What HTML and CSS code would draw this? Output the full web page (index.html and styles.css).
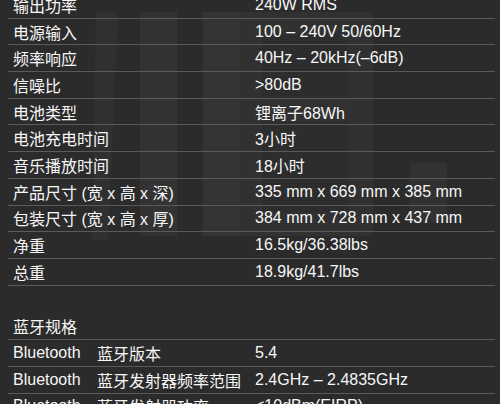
FILE: index.html
```html
<!DOCTYPE html>
<html lang="zh-CN">
<head>
    <meta charset="UTF-8">
    <meta name="viewport" content="width=device-width, initial-scale=1.0">
    <title>产品规格</title>
    <link rel="stylesheet" href="styles.css">
</head>
<body>
    <svg class="watermark" width="500" height="404" viewBox="0 0 500 404" aria-hidden="true">
        <path d="M96 12 L118 12 L108 240 L92 240 Z" fill="#303030"/>
        <rect x="140" y="12" width="37" height="224" fill="#333"/>
        <rect x="203" y="12" width="37" height="224" fill="#343434"/>
        <rect x="240" y="12" width="133" height="224" fill="#313131"/>
        <rect x="262" y="34" width="86" height="64" fill="#2d2d2d"/>
        <rect x="262" y="122" width="86" height="90" fill="#2d2d2d"/>
        <rect x="410" y="163" width="37" height="60" fill="#323232"/>
    </svg>

    <div class="specs">
        <div class="row"><span class="name">输出功率</span><span class="value">240W RMS</span></div>
        <div class="row"><span class="name">电源输入</span><span class="value">100 – 240V 50/60Hz</span></div>
        <div class="row"><span class="name">频率响应</span><span class="value">40Hz – 20kHz(–6dB)</span></div>
        <div class="row"><span class="name">信噪比</span><span class="value">&gt;80dB</span></div>
        <div class="row"><span class="name">电池类型</span><span class="value">锂离子68Wh</span></div>
        <div class="row"><span class="name">电池充电时间</span><span class="value">3小时</span></div>
        <div class="row"><span class="name">音乐播放时间</span><span class="value">18小时</span></div>
        <div class="row"><span class="name">产品尺寸 (宽 x 高 x 深)</span><span class="value">335 mm x 669 mm x 385 mm</span></div>
        <div class="row"><span class="name">包装尺寸 (宽 x 高 x 厚)</span><span class="value">384 mm x 728 mm x 437 mm</span></div>
        <div class="row"><span class="name">净重</span><span class="value">16.5kg/36.38lbs</span></div>
        <div class="row"><span class="name">总重</span><span class="value">18.9kg/41.7lbs</span></div>

        <div class="row section">蓝牙规格</div>
        <div class="row"><span>Bluetooth</span><span>蓝牙版本</span><span class="value">5.4</span></div>
        <div class="row"><span>Bluetooth</span><span>蓝牙发射器频率范围</span><span class="value">2.4GHz – 2.4835GHz</span></div>
        <div class="row"><span>Bluetooth</span><span>蓝牙发射器功率</span><span class="value">&lt;10dBm(EIRP)</span></div>
    </div>
</body>
</html>
```

FILE: styles.css
```css
* { box-sizing: border-box; }
body {
    margin: 0;
    height: 404px;
    overflow: hidden;
    background: #2b2b2b;
    color: #f7f7f7;
    font-family: 'Liberation Sans', 'Noto Sans CJK SC', sans-serif;
    font-size: 16px;
    position: relative;
}

.watermark {
    position: absolute;
    top: 0;
    left: 0;
}

.specs {
    position: relative;
    margin: -8px 5px 0 8px;
}

.row {
    display: grid;
    grid-template-columns: 84px 158px 1fr;
    align-items: center;
    height: 26.7px;
    padding-left: 5px;
    border-bottom: 1px solid #5a5a5a;
    white-space: nowrap;
}
.row .name {
    grid-column: 1 / 3;
}

.section {
    display: flex;
    margin-top: 28px;
}
```
